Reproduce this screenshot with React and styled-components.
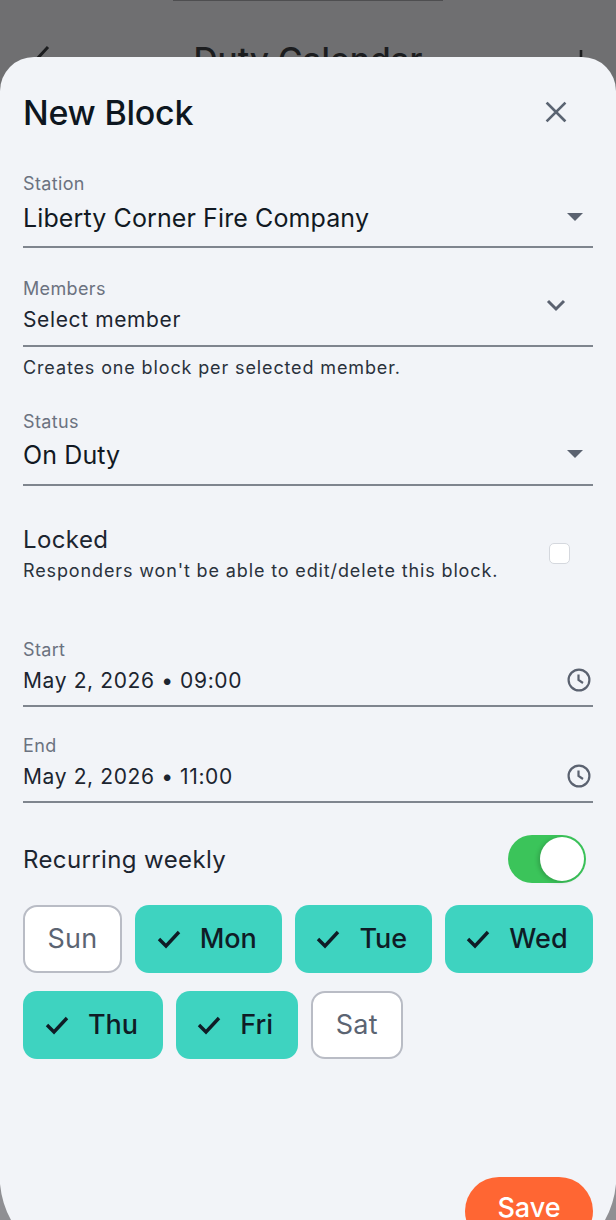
import React from "react";
import styled, { createGlobalStyle } from "styled-components";

const Global = createGlobalStyle`
  html, body { margin: 0; padding: 0; background: #6f6f71; }
  body { font-family: Inter, "Liberation Sans", sans-serif; }
`;

const Page = styled.div`
  width: 616px;
  height: 1220px;
  overflow: hidden;
  position: relative;
  background: #6f6f71;
`;

const Behind = styled.div`
  height: 57px;
  overflow: hidden;
  display: flex;
  align-items: flex-start;
  justify-content: space-between;
  padding: 40px 28px 0 34px;
  box-sizing: border-box;
  color: #1c1d1f;
  font-size: 33.5px;
  font-weight: 500;
  line-height: 40px;
`;

const BehindTitle = styled.span`
  margin-right: 10px;
`;

const Notch = styled.div`
  position: absolute;
  top: 0;
  left: 173px;
  width: 270px;
  height: 1px;
  background: #4e4e50;
`;

const Bezel = styled.svg`
  position: absolute;
  bottom: 0;
  ${(p) => (p.$side === "left" ? "left: 0;" : "right: 0;")}
`;

const Sheet = styled.div`
  height: 1163px;
  box-sizing: border-box;
  background: #f2f4f8;
  border-radius: 34px 34px 0 0;
  padding: 36px 23px 0;
  display: flex;
  flex-direction: column;
  position: relative;
`;

const Header = styled.div`
  display: flex;
  justify-content: space-between;
  align-items: center;
  height: 40px;
  margin-bottom: 40px;
  padding-right: 25px;
`;

const Title = styled.div`
  font-size: 34px;
  font-weight: 500;
  color: #0d1620;
  letter-spacing: -0.25px;
  line-height: 40px;
`;

const CloseIcon = styled.svg`
  margin-bottom: 2px;
`;

const Field = styled.div`
  position: relative;
  height: ${(p) => p.$h}px;
  border-bottom: 2px solid #7f858e;
  box-sizing: border-box;
  margin-bottom: ${(p) => p.$mb || 0}px;
`;

const Label = styled.div`
  font-size: 18px;
  line-height: 22px;
  color: #6b7280;
  letter-spacing: 0.35px;
`;

const BigValue = styled.div`
  font-size: 25px;
  line-height: 32px;
  margin-top: ${(p) => p.$mt}px;
  color: #111923;
  letter-spacing: 0.11px;
`;

const Value = styled.div`
  font-size: 21px;
  line-height: 28px;
  margin-top: 6px;
  color: #1c2530;
  letter-spacing: 0.62px;
`;

const Help = styled.div`
  font-size: 18px;
  line-height: 22px;
  color: #2a323c;
  letter-spacing: 0.87px;
  margin-top: ${(p) => p.$mt || 0}px;
  margin-bottom: ${(p) => p.$mb || 0}px;
`;

const Caret = styled.div`
  position: absolute;
  right: 10px;
  top: ${(p) => p.$top}px;
  width: 0;
  height: 0;
  border-left: 8px solid transparent;
  border-right: 8px solid transparent;
  border-top: 8px solid #5b6270;
`;

const FieldIcon = styled.svg`
  position: absolute;
  right: ${(p) => p.$right}px;
  top: ${(p) => p.$top}px;
`;

const LockRow = styled.div`
  display: flex;
  justify-content: space-between;
  align-items: flex-start;
  height: 100px;
  padding-right: 23px;
  margin-bottom: 15px;
`;

const LockTitle = styled.div`
  font-size: 24px;
  line-height: 30px;
  color: #1c2530;
  letter-spacing: 0.4px;
  margin-top: 1px;
  margin-bottom: 5px;
`;

const CheckBox = styled.div`
  width: 21px;
  height: 21px;
  box-sizing: border-box;
  background: #ffffff;
  border: 1.5px solid #d5d8de;
  border-radius: 5px;
  margin-top: 19px;
`;

const RecurRow = styled.div`
  display: flex;
  justify-content: space-between;
  align-items: center;
  height: 48px;
  margin-top: 32px;
  padding-right: 7px;
`;

const RecurLabel = styled.div`
  font-size: 24px;
  color: #1c2530;
  letter-spacing: 0.38px;
`;

const Toggle = styled.div`
  width: 78px;
  height: 48px;
  border-radius: 24px;
  background: #3bc45a;
  position: relative;
`;

const Knob = styled.div`
  position: absolute;
  top: 2px;
  right: 2px;
  width: 44px;
  height: 44px;
  border-radius: 50%;
  background: #fff;
  box-shadow: -2px 1px 4px rgba(0, 0, 0, 0.18);
`;

const Chips = styled.div`
  display: flex;
  flex-wrap: wrap;
  gap: 18px 12.5px;
  margin-top: 22px;
  width: 570px;
`;

const Chip = styled.div`
  height: 68px;
  box-sizing: border-box;
  width: ${(p) => p.$w}px;
  border-radius: 14px;
  display: flex;
  align-items: center;
  justify-content: center;
  gap: 19px;
  font-size: 27px;
  line-height: 66px;
  letter-spacing: ${(p) => (p.$on ? "0" : "0.2px")};
  font-weight: ${(p) => (p.$on ? 500 : 400)};
  color: ${(p) => (p.$on ? "#0f1c26" : "#5b6472")};
  background: ${(p) => (p.$on ? "#3ed3c0" : "#ffffff")};
  border: ${(p) => (p.$on ? "none" : "2px solid #b9bcc5")};
  padding-right: ${(p) => (p.$on ? "3px" : "0")};
`;

const Save = styled.div`
  position: absolute;
  right: 23px;
  top: 1120px;
  width: 128px;
  height: 68px;
  border-radius: 34px;
  background: #ff6633;
  color: #ffffff;
  font-size: 27px;
  font-weight: 500;
  display: flex;
  justify-content: center;
  padding-top: 14px;
  box-sizing: border-box;
`;

const Close = () => (
  <CloseIcon width="24" height="24" viewBox="0 0 24 24" fill="none" stroke="#5b6472" strokeWidth="2.6" strokeLinecap="square">
    <path d="M3.5 3.5 L20.5 20.5 M20.5 3.5 L3.5 20.5" />
  </CloseIcon>
);

const Check = () => (
  <svg width="24" height="20" viewBox="0 0 24 20" fill="none" stroke="#0f1c26" strokeWidth="3.4">
    <path d="M2 10 L9 17 L22 3" />
  </svg>
);

const Clock = () => (
  <FieldIcon $right={2} $top={29} width="24" height="24" viewBox="0 0 24 24" fill="none" stroke="#5b6270" strokeWidth="2.2">
    <circle cx="12" cy="12" r="10.4" />
    <path d="M11.5 6.5 V12 L16 15" />
  </FieldIcon>
);

const days = [
  ["Sun", 99, false],
  ["Mon", 147.5, true],
  ["Tue", 137.5, true],
  ["Wed", 148, true],
  ["Thu", 140, true],
  ["Fri", 122.5, true],
  ["Sat", 92.5, false],
];

export default function App() {
  return (
    <Page>
      <Global />
      <Notch />
      <Behind>
        <svg width="18" height="30" viewBox="0 0 18 30" fill="none" stroke="#1c1d1f" strokeWidth="3">
          <path d="M14 7 L2 20 L14 33" />
        </svg>
        <BehindTitle>Duty Calendar</BehindTitle>
        <svg width="14" height="30" viewBox="0 0 14 30" fill="none" stroke="#1c1d1f" strokeWidth="2.6">
          <path d="M7 10 V30" />
        </svg>
      </Behind>
      <Sheet>
        <Header>
          <Title>New Block</Title>
          <Close />
        </Header>
        <Field $h={75} $mb={30}>
          <Label>Station</Label>
          <BigValue $mt={7}>Liberty Corner Fire Company</BigValue>
          <Caret $top={40} />
        </Field>
        <Field $h={69}>
          <Label>Members</Label>
          <Value>Select member</Value>
          <FieldIcon $right={26} $top={21} width="22" height="14" viewBox="0 0 22 14" fill="none" stroke="#5b6270" strokeWidth="3">
            <path d="M3 2 L11 10 L19 2" />
          </FieldIcon>
        </Field>
        <Help $mt={10} $mb={32}>Creates one block per selected member.</Help>
        <Field $h={75} $mb={38}>
          <Label>Status</Label>
          <BigValue $mt={6}>On Duty</BigValue>
          <Caret $top={39} />
        </Field>
        <LockRow>
          <div>
            <LockTitle>Locked</LockTitle>
            <Help>Responders won't be able to edit/delete this block.</Help>
          </div>
          <CheckBox />
        </LockRow>
        <Field $h={68} $mb={28}>
          <Label>Start</Label>
          <Value>May 2, 2026 • 09:00</Value>
          <Clock />
        </Field>
        <Field $h={68}>
          <Label>End</Label>
          <Value>May 2, 2026 • 11:00</Value>
          <Clock />
        </Field>
        <RecurRow>
          <RecurLabel>Recurring weekly</RecurLabel>
          <Toggle>
            <Knob />
          </Toggle>
        </RecurRow>
        <Chips>
          {days.map(([d, w, on]) => (
            <Chip key={d} $w={w} $on={on}>
              {on && <Check />}
              {d}
            </Chip>
          ))}
        </Chips>
        <Save>Save</Save>
      </Sheet>
      <Bezel $side="left" width="12" height="36" viewBox="0 0 12 36">
        <path d="M0 0 Q2 20 11 36 L0 36 Z" fill="#8f8f93" />
      </Bezel>
      <Bezel $side="right" width="12" height="36" viewBox="0 0 12 36">
        <path d="M12 0 Q10 20 1 36 L12 36 Z" fill="#8f8f93" />
      </Bezel>
    </Page>
  );
}
